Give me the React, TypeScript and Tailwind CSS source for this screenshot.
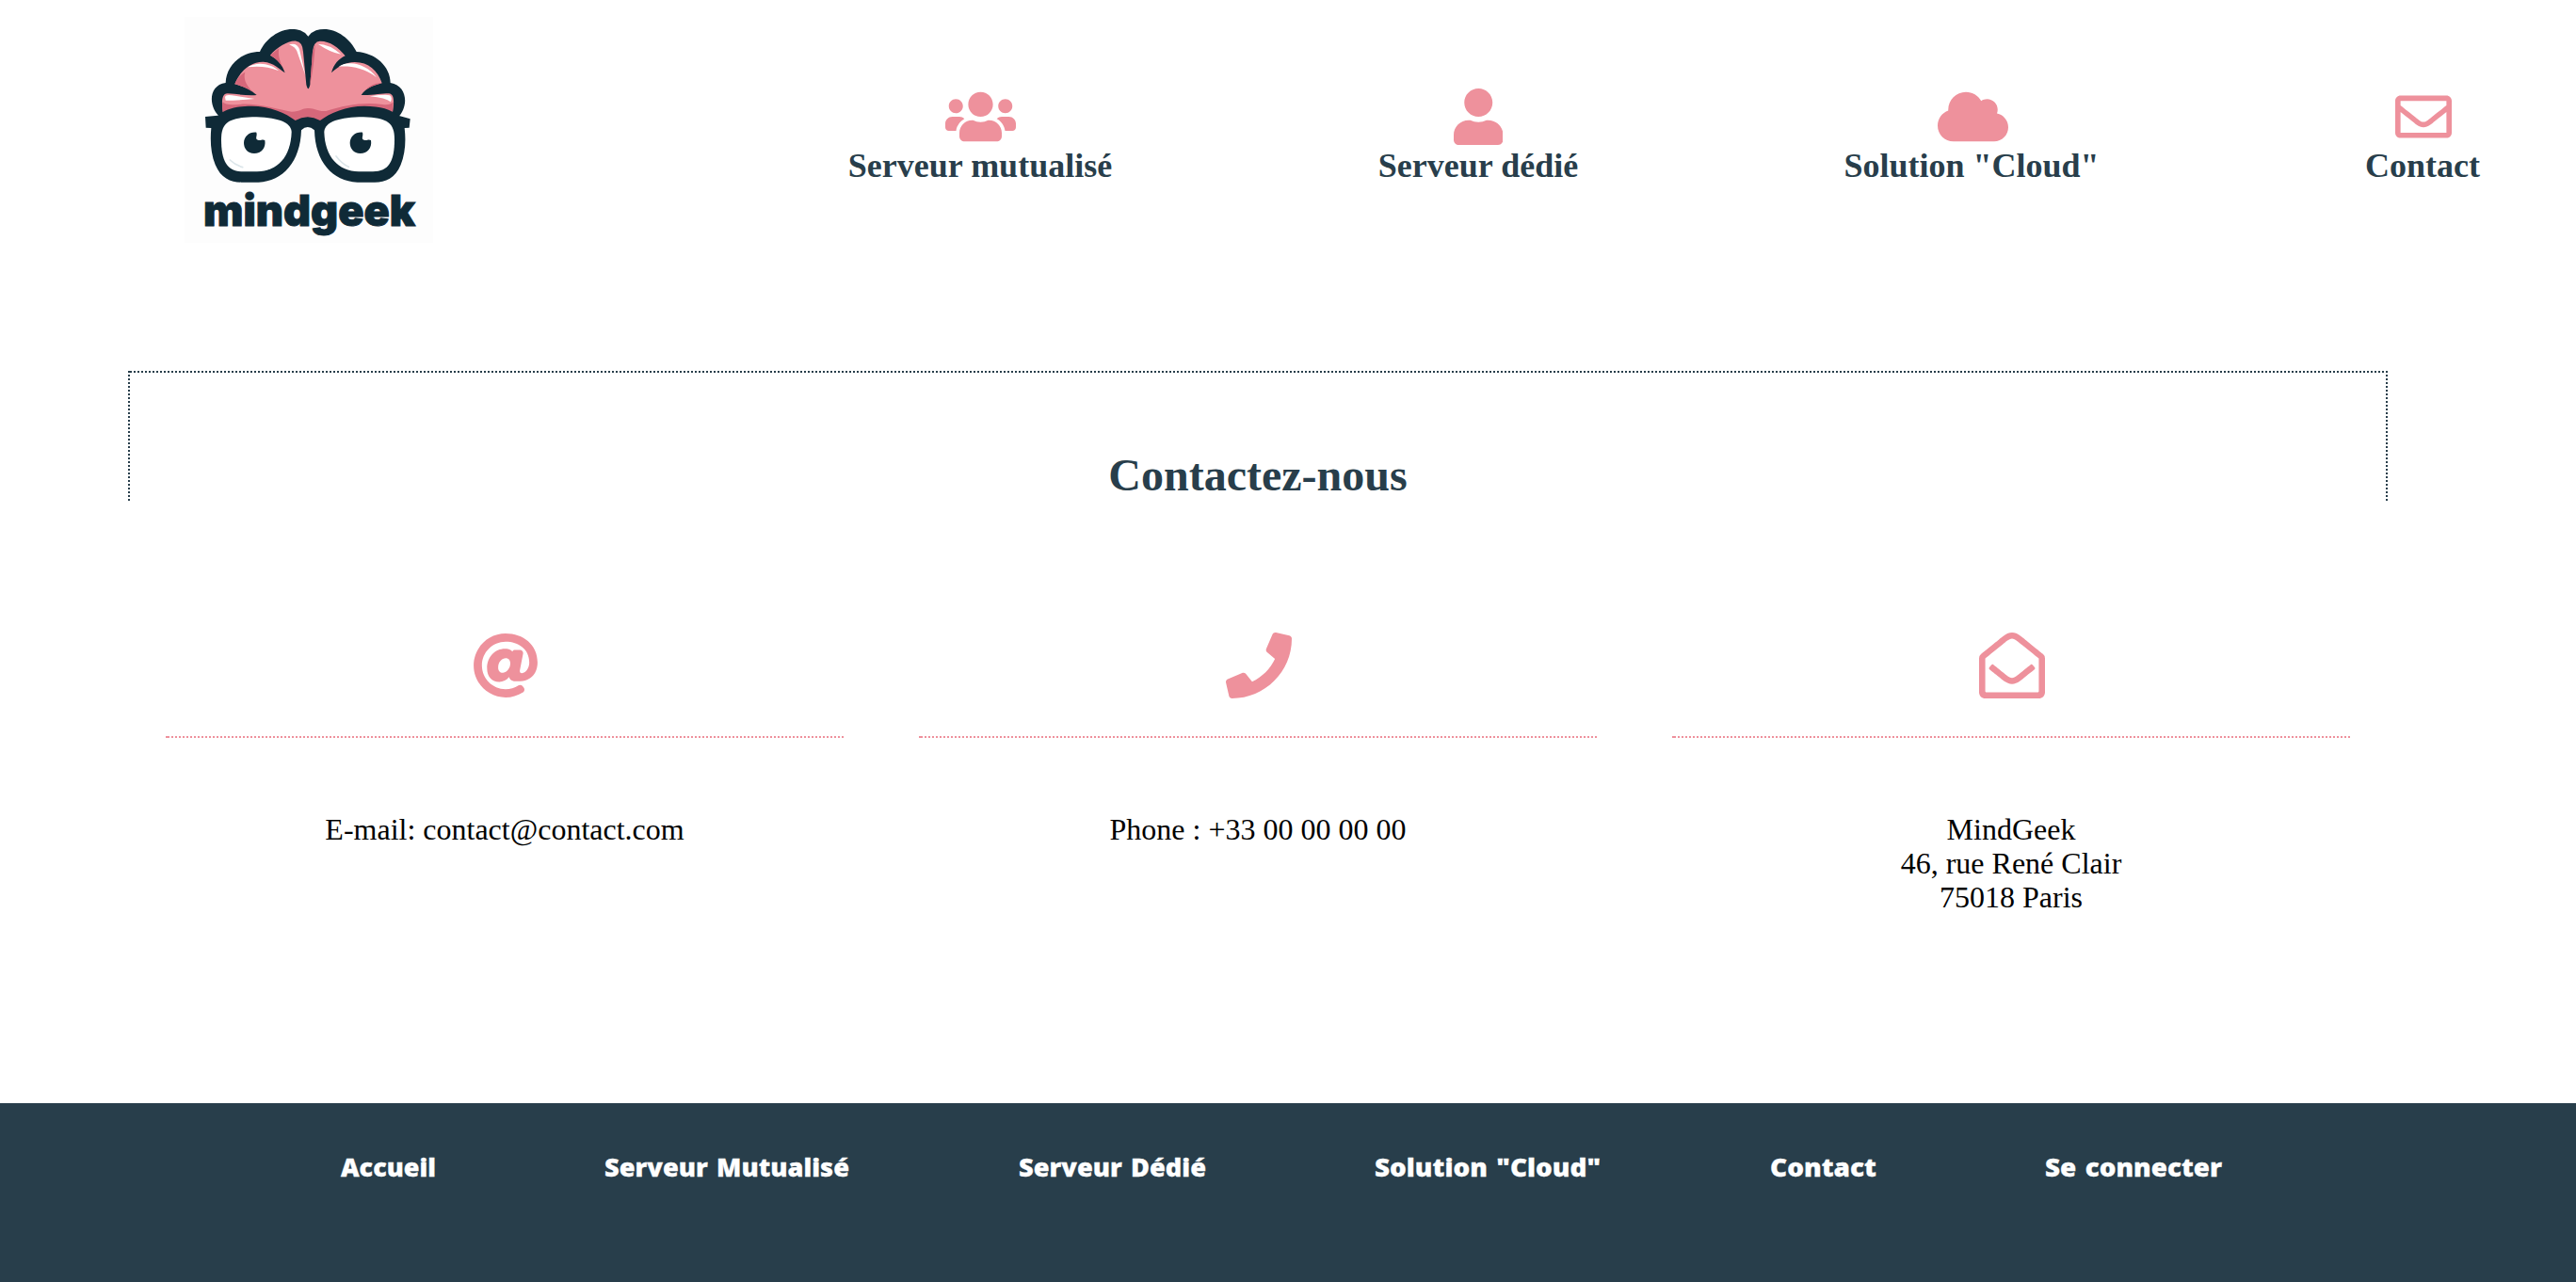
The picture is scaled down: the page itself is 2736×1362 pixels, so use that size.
import { FaUsers, FaUser, FaCloud, FaRegEnvelope, FaAt, FaPhone, FaRegEnvelopeOpen } from "react-icons/fa";

const services = [
  { label: "Serveur mutualisé", Icon: FaUsers, box: "w-[422px] ml-[370px]", icon: "w-[75px]" },
  { label: "Serveur dédié", Icon: FaUser, box: "w-[422px] ml-[107px]", icon: "w-[52.5px]" },
  { label: 'Solution "Cloud"', Icon: FaCloud, box: "w-[422px] ml-[102px]", icon: "w-[75px] ml-0.5" },
  { label: "Contact", Icon: FaRegEnvelope, box: "w-[324px] ml-[106px]", icon: "w-[60px] ml-0.5" },
];

const contacts = [
  { Icon: FaAt, lines: ["E-mail: contact@contact.com"] },
  { Icon: FaPhone, lines: ["Phone : +33 00 00 00 00"] },
  { Icon: FaRegEnvelopeOpen, lines: ["MindGeek", "46, rue René Clair", "75018 Paris"] },
];

const links = [
  { label: "Accueil", width: 101 },
  { label: "Serveur Mutualisé", width: 260 },
  { label: "Serveur Dédié", width: 199 },
  { label: 'Solution "Cloud"', width: 240 },
  { label: "Contact", width: 113 },
  { label: "Se connecter", width: 188 },
];

function Logo() {
  return (
    <svg viewBox="49 54 792 720" className="h-[240px] w-[264px] shrink-0 bg-[#fdfdfd]" role="img" aria-label="mindgeek">
      {/* brain outline */}
      <path
        fill="#0f2a37"
        d="M165 375C125 345 122 272 180 264C182 210 228 165 289 165C310 115 370 80 418 97Q434 103 443 116Q452 103 468 97C516 80 574 115 597 165C657 168 705 212 705 264C763 274 762 345 728 375Z"
      />
      <path
        fill="#ee919c"
        d="M171 356C168 330 165 298 186 298C220 300 250 306 279 303C258 284 235 276 209 268C225 225 262 196 300 197C335 200 350 220 369 232C360 205 345 190 322 176C345 150 380 128 405 131Q425 133 427 165L437 270Q443 295 449 270L457 165Q460 132 480 131C510 130 540 150 561 178C540 188 524 205 517 232C537 213 560 198 592 198C635 198 665 225 678 265C650 272 628 280 612 303C650 304 675 298 700 298C720 300 716 330 712 358L481 392H402L171 358Z"
      />
      <path fill="#d5677a" d="M171 356C169 345 168 335 171 325Q180 338 230 332C290 330 350 350 390 356C420 355 425 344 443 345C465 344 470 356 500 354C560 335 620 325 680 333Q705 336 714 325L712 358L481 392H402L171 358Z" />
      <path fill="#d5677a" d="M209 268C218 250 226 238 242 230C234 255 250 280 279 303C258 284 235 276 209 268ZM322 176L350 154C345 180 355 200 369 232C360 205 345 190 322 176ZM457 165L465 140C463 190 456 240 449 270ZM678 265Q648 262 625 288Q645 273 678 265Z" />
      <path fill="#fff" d="M382 142Q408 135 415 157L434 240Q420 200 407 163Q402 150 382 142ZM474 140Q510 140 548 173Q515 168 474 140ZM250 214C280 195 325 202 350 226C315 212 285 210 250 214ZM540 212C575 190 630 205 661 247C620 215 580 210 540 212ZM178 310Q180 300 200 304L272 315Q220 320 180 320ZM640 307Q690 300 703 304Q712 310 706 325Q690 312 640 307Z" />
      {/* glasses */}
      <path
        fill="#0f2a37"
        d="M115 372L155 368C180 348 210 338 262 338C320 338 372 360 402 384Q441 362 481 384C512 360 565 338 622 338C675 338 705 348 730 368L768 379L765 407L750 408C755 450 752 490 738 525C720 568 690 581 655 581L600 581C520 578 465 515 463 415Q441 395 421 415C418 515 363 578 285 581L230 581C195 581 165 568 147 525C133 490 130 450 134 408L117 407Z"
      />
      <path fill="#fff" d="M166 445C166 390 190 376 265 373C340 373 388 388 390 420C388 500 345 546 280 547L235 547C185 547 166 515 166 445Z" />
      <path fill="#fff" d="M718 445C718 390 694 376 619 373C544 373 496 388 494 420C496 500 539 546 604 547L649 547C699 547 718 515 718 445Z" />
      <path fill="none" stroke="#dce6ea" strokeWidth="5" strokeLinecap="round" d="M194 510Q210 526 234 533M532 498Q550 522 572 532" />
      <g fill="#0f2a37">
        <path d="M278 422C282 432 272 442 283 446C292 450 296 442 305 447C309 471 294 489 271 489C249 489 238 472 238 455C239 435 255 420 278 422Z" />
        <path d="M616 422C620 432 610 442 621 446C630 450 634 442 643 447C647 471 632 489 609 489C587 489 576 472 576 455C577 435 593 420 616 422Z" />
      </g>
      <text
        x="109"
        y="720"
        textLength="675"
        lengthAdjust="spacingAndGlyphs"
        fill="#0f2a37"
        stroke="#0f2a37"
        strokeWidth="3"
        className="font-['Inter',sans-serif] text-[138px] font-black"
      >
        mindgeek
      </text>
    </svg>
  );
}

export default function App() {
  return (
    <div className="h-[1362px] w-[2736px] overflow-hidden bg-white font-['Liberation_Serif',serif]">
      <header className="flex h-[394px] items-start pt-[18px] pl-[196px]">
        <Logo />
        <nav className="flex pt-[76px]">
          {services.map(({ label, Icon, box, icon }) => (
            <a key={label} className={`flex shrink-0 flex-col items-center ${box}`}>
              <Icon className={`h-[60px] text-[#ee919c] ${icon}`} />
              <span className="text-[36px] leading-[44px] font-bold whitespace-nowrap text-[#283e4b]">{label}</span>
            </a>
          ))}
        </nav>
      </header>

      <main className="ml-[136px] h-[778px] w-[2400px]">
        <div className="flex h-[138px] justify-between">
          <div className="w-0.5 bg-[repeating-linear-gradient(180deg,#283e4b_0px_2px,transparent_2px_4px)]" />
          <div className="flex flex-1 flex-col">
            <div className="h-0.5 bg-[repeating-linear-gradient(90deg,#283e4b_0px_2px,transparent_2px_4px)]" />
            <h1 className="pt-[82px] text-center text-[48px] leading-[54px] font-bold text-[#283e4b]">Contactez-nous</h1>
          </div>
          <div className="w-0.5 bg-[repeating-linear-gradient(180deg,#283e4b_0px_2px,transparent_2px_4px)]" />
        </div>
        <div className="flex gap-20 px-10 pt-[140px]">
          {contacts.map(({ Icon, lines }) => (
            <section key={lines[0]} className="w-[720px]">
              <div className="flex h-[110px] justify-center pl-0.5">
                <Icon className="size-[70px] text-[#ee919c]" />
              </div>
              <div className="h-0.5 bg-[linear-gradient(90deg,#ee919c_2px,transparent_2px),repeating-linear-gradient(90deg,transparent_0px_2px,#ee919c_2px_4px)]" />
              <p className="pt-[79px] text-center text-[32px] leading-[36px] text-black">
                {lines.map((line) => (
                  <span key={line} className="block">
                    {line}
                  </span>
                ))}
              </p>
            </section>
          ))}
        </div>
      </main>

      <footer className="h-[190px] bg-[#283e4b] pt-[50px] pl-[362px]">
        <ul className="flex gap-[179.4px]">
          {links.map(({ label, width }) => (
            <li key={label} style={{ width }}>
              <svg className="h-10 w-full overflow-visible">
                <text
                  y="28"
                  textLength={width}
                  lengthAdjust="spacingAndGlyphs"
                  className="fill-white stroke-white stroke-[0.3px] font-['Open_Sans',sans-serif] text-[26px] font-extrabold [word-spacing:2px]"
                >
                  {label}
                </text>
              </svg>
            </li>
          ))}
        </ul>
      </footer>
    </div>
  );
}
